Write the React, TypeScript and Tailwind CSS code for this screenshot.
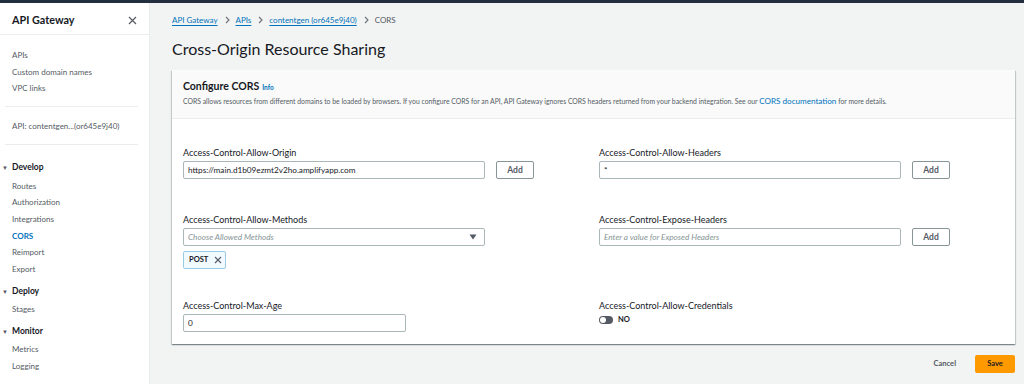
import React from "react";

const font = { fontFamily: "Lato, 'Open Sans', 'Noto Sans', sans-serif" };

function NavItem({ label, active }: { label: string; active?: boolean }) {
  return (
    <div
      className={`h-[16.6px] flex items-center pl-[12px] text-[8px] ${
        active ? "text-[#0073bb] font-bold" : "text-[#545b64]"
      }`}
    >
      {label}
    </div>
  );
}

function Section({ label }: { label: string }) {
  return (
    <div className="h-[16.6px] mb-[1.5px] flex items-center text-[8.5px] font-bold text-[#16191f]">
      <span className="w-[12px] pl-[2px] text-[6px] text-[#545b64]">▼</span>
      {label}
    </div>
  );
}

function Chevron() {
  return (
    <svg width="5" height="8" viewBox="0 0 5 8" className="ml-[7px] mr-[6px]">
      <path d="M1 1 L4 4 L1 7" stroke="#687078" strokeWidth="1.1" fill="none" />
    </svg>
  );
}

function Crumb({ children }: { children: React.ReactNode }) {
  return <span className="text-[#0073bb] underline decoration-[#0073bb] underline-offset-2">{children}</span>;
}

function Label({ children }: { children: React.ReactNode }) {
  return <div className="h-[10px] leading-[10px] text-[9px] text-[#16191f] mb-[3px]">{children}</div>;
}

function AddBtn() {
  return (
    <div className="w-[38px] h-[18px] border border-[#879596] rounded-[2px] flex items-center justify-center text-[8.5px] font-bold text-[#545b64] bg-white">
      Add
    </div>
  );
}

function Input({ value, placeholder, w }: { value?: string; placeholder?: string; w: string }) {
  return (
    <div className={`${w} h-[18px] border border-[#aab7b8] rounded-[2px] flex items-center px-[4px] text-[8.2px] bg-white`}>
      {value !== undefined ? (
        <span className="text-[#16191f]">{value}</span>
      ) : (
        <span className="text-[#879596] italic">{placeholder}</span>
      )}
    </div>
  );
}

export default function App() {
  return (
    <div style={font} className="w-[1024px] h-[384px] overflow-hidden bg-[#f2f3f3] flex flex-col">
      <div className="h-[3px] bg-[#232f3e] shrink-0" />
      <div className="flex flex-1 min-h-0">
        {/* Sidebar */}
        <aside className="w-[150px] shrink-0 bg-white border-r border-[#eaeded] flex flex-col">
          <div className="h-[32px] pt-[3px] border-b border-[#eaeded] flex items-center justify-between pl-[12px] pr-[12px]">
            <span className="text-[10.8px] font-bold text-[#16191f]">API Gateway</span>
            <svg width="9" height="9" viewBox="0 0 9 9">
              <path d="M1 1 L8 8 M8 1 L1 8" stroke="#545b64" strokeWidth="1.2" />
            </svg>
          </div>
          <div className="pt-[12px]">
            <NavItem label="APIs" />
            <NavItem label="Custom domain names" />
            <NavItem label="VPC links" />
          </div>
          <div className="ml-[5px] mr-[11px] mt-[9px] border-t border-[#eaeded]" />
          <div className="mt-[11px]">
            <NavItem label="API: contentgen...(or645e9j40)" />
          </div>
          <div className="ml-[5px] mr-[11px] mt-[10px] border-t border-[#eaeded]" />
          <div className="mt-[14px]">
            <Section label="Develop" />
            <NavItem label="Routes" />
            <NavItem label="Authorization" />
            <NavItem label="Integrations" />
            <NavItem label="CORS" active />
            <NavItem label="Reimport" />
            <NavItem label="Export" />
          </div>
          <div className="mt-[6px]">
            <Section label="Deploy" />
            <NavItem label="Stages" />
          </div>
          <div className="mt-[5px]">
            <Section label="Monitor" />
            <NavItem label="Metrics" />
            <NavItem label="Logging" />
          </div>
        </aside>

        {/* Main */}
        <main className="flex-1 pl-[22px] pr-[9px] pt-[11px]">
          <div className="h-[12px] flex items-center text-[8px]">
            <Crumb>API Gateway</Crumb>
            <Chevron />
            <Crumb>APIs</Crumb>
            <Chevron />
            <Crumb>contentgen (or645e9j40)</Crumb>
            <Chevron />
            <span className="text-[#545b64]">CORS</span>
          </div>
          <h1 className="mt-[13px] h-[20px] leading-[20px] text-[16px] text-[#16191f]">Cross-Origin Resource Sharing</h1>

          <div className="mt-[11px] bg-white shadow-[0_1px_1px_0_rgba(0,28,36,0.3),1px_1px_1px_0_rgba(0,28,36,0.15),-1px_1px_1px_0_rgba(0,28,36,0.15)]">
            <div className="bg-[#fafafa] border-b border-[#eaeded] px-[11px] pt-[10px] pb-[12px]">
              <div className="h-[14px] flex items-center gap-[3px]">
                <span className="text-[10.5px] font-bold text-[#16191f]">Configure CORS</span>
                <span className="text-[6.5px] font-bold text-[#0073bb] mt-[2px]">Info</span>
              </div>
              <div className="h-[10px] mt-[2px] flex items-center text-[6.85px] text-[#545b64] whitespace-nowrap">
                CORS allows resources from different domains to be loaded by browsers. If you configure CORS for an API, API Gateway ignores CORS headers returned from your backend integration. See our&nbsp;
                <span className="text-[8.1px] text-[#0073bb]">CORS documentation</span>
                &nbsp;for more details.
              </div>
            </div>

            <div className="px-[11px] pt-[29px] pb-[12px] grid grid-cols-[416px_1fr]">
              {/* Row 1 */}
              <div className="pb-[36px]">
                <Label>Access-Control-Allow-Origin</Label>
                <div className="flex gap-[11px]">
                  <Input w="w-[302px]" value="https://main.d1b09ezmt2v2ho.amplifyapp.com" />
                  <AddBtn />
                </div>
              </div>
              <div className="pb-[36px]">
                <Label>Access-Control-Allow-Headers</Label>
                <div className="flex gap-[11px]">
                  <Input w="w-[302px]" value="*" />
                  <AddBtn />
                </div>
              </div>

              {/* Row 2 */}
              <div className="pb-[32px]">
                <Label>Access-Control-Allow-Methods</Label>
                <div className="w-[302px] h-[18px] border border-[#aab7b8] rounded-[2px] flex items-center justify-between px-[4px] text-[8.2px] bg-white">
                  <span className="text-[#879596] italic">Choose Allowed Methods</span>
                  <svg width="8" height="6" viewBox="0 0 8 6" className="mr-[3px]">
                    <path d="M0.5 0.5 L7.5 0.5 L4 5.5 Z" fill="#545b64" />
                  </svg>
                </div>
                <div className="mt-[5px] w-[43px] h-[18px] bg-[#f1faff] border border-[#99cbe4] rounded-[2px] flex items-center pl-[5px] gap-[6px]">
                  <span className="text-[7.5px] text-[#16191f] font-bold">POST</span>
                  <svg width="8" height="8" viewBox="0 0 8 8">
                    <path d="M1 1 L7 7 M7 1 L1 7" stroke="#545b64" strokeWidth="1.1" />
                  </svg>
                </div>
              </div>
              <div className="pb-[32px]">
                <Label>Access-Control-Expose-Headers</Label>
                <div className="flex gap-[11px]">
                  <Input w="w-[302px]" placeholder="Enter a value for Exposed Headers" />
                  <AddBtn />
                </div>
              </div>

              {/* Row 3 */}
              <div>
                <Label>Access-Control-Max-Age</Label>
                <Input w="w-[223px]" value="0" />
              </div>
              <div>
                <Label>Access-Control-Allow-Credentials</Label>
                <div className="h-[12px] flex items-center gap-[5px]">
                  <div className="w-[14px] h-[8px] rounded-full bg-[#545b64] flex items-center pl-[1px]">
                    <div className="w-[6px] h-[6px] rounded-full bg-white" />
                  </div>
                  <span className="text-[7.5px] font-bold text-[#16191f]">NO</span>
                </div>
              </div>
            </div>
          </div>

          <div className="mt-[11px] flex justify-end items-center gap-[19px]">
            <span className="text-[7.5px] font-bold text-[#545b64]">Cancel</span>
            <div className="w-[40px] h-[18px] bg-[#ff9900] rounded-[2px] flex items-center justify-center text-[7.5px] font-bold text-[#16191f]">
              Save
            </div>
          </div>
        </main>
      </div>
    </div>
  );
}
